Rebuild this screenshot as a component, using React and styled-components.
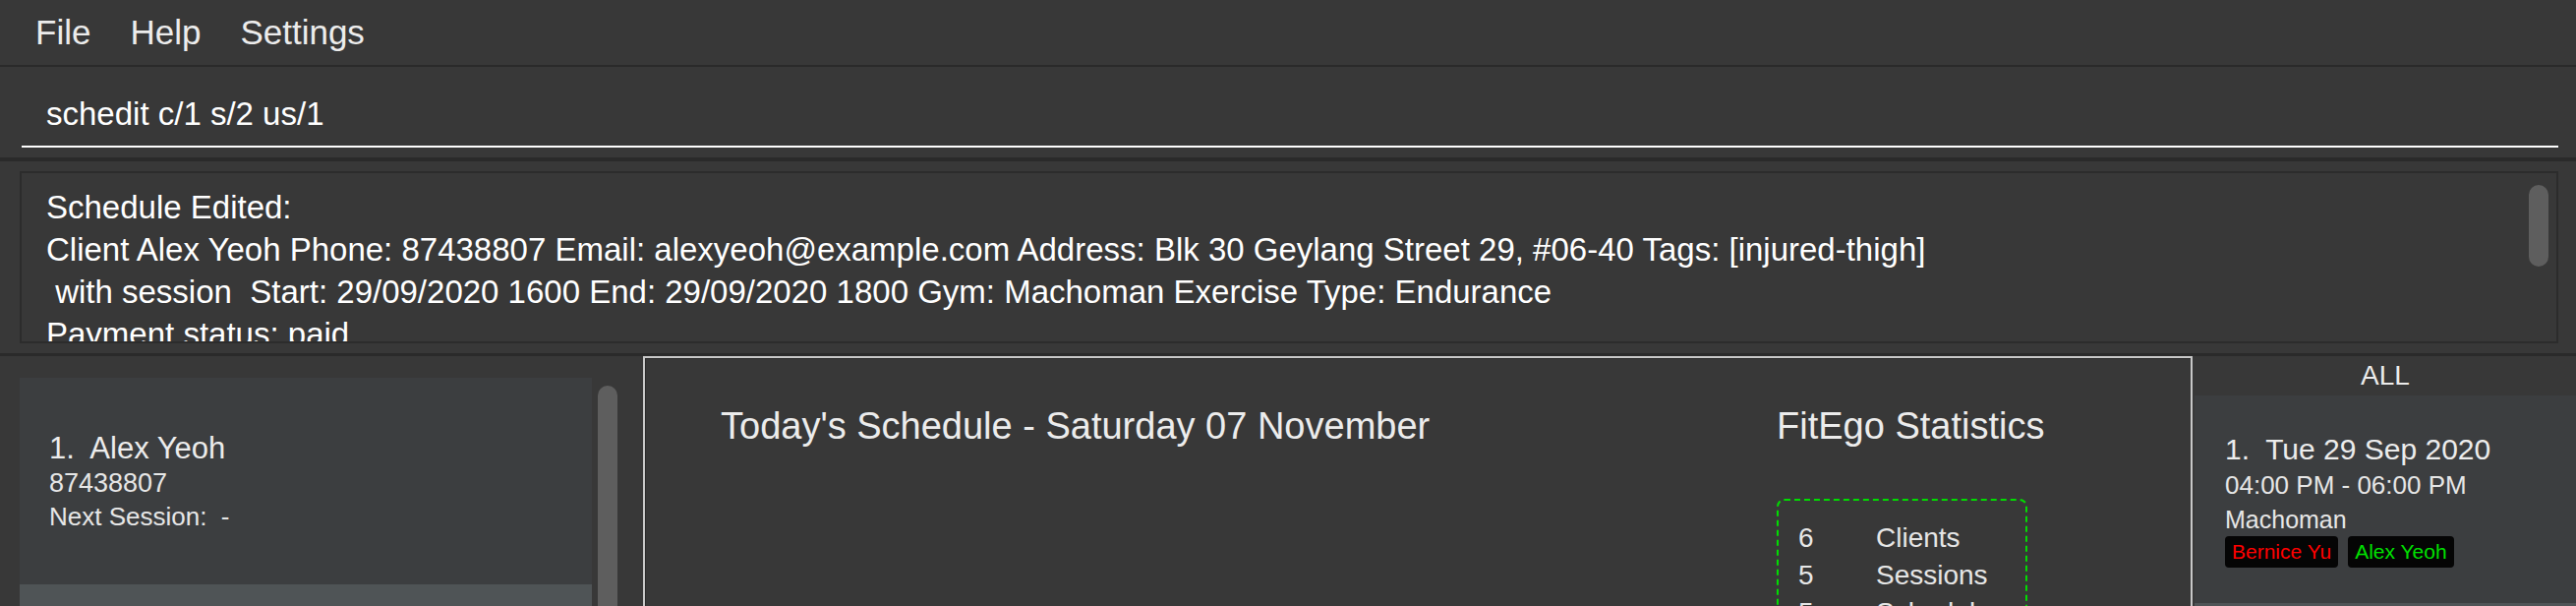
import React from "react";
import styled, { createGlobalStyle } from "styled-components";

const GlobalStyle = createGlobalStyle`
  html, body {
    margin: 0;
    padding: 0;
    background: #383838;
    overflow: hidden;
  }
  * {
    box-sizing: border-box;
  }
`;

const Window = styled.div`
  width: 2620px;
  height: 616px;
  display: flex;
  flex-direction: column;
  background: #383838;
  font-family: "Liberation Sans", Arial, sans-serif;
  color: #ececec;
  overflow: hidden;
`;

const MenuBar = styled.div`
  display: flex;
  height: 68px;
  flex: none;
  padding: 1px 0 0 16px;
  border-bottom: 2px solid #2a2a2a;
`;

const MenuItem = styled.div`
  padding: 0 20px;
  font-size: 35px;
  line-height: 64px;
  color: #ececec;
`;

const CommandBar = styled.div`
  height: 96px;
  flex: none;
  padding: 0 18px 0 22px;
  border-bottom: 4px solid #2a2a2a;
`;

const CommandInput = styled.div`
  height: 82px;
  padding: 28px 0 0 25px;
  font-size: 33px;
  line-height: 40px;
  color: #ffffff;
  border-bottom: 2px solid #ffffff;
`;

const ResultPane = styled.div`
  height: 198px;
  flex: none;
  padding: 10px 18px 10px 20px;
  border-bottom: 3px solid #2a2a2a;
`;

const ResultBox = styled.div`
  position: relative;
  height: 175px;
  padding: 13px 60px 0 25px;
  border: 2px solid #2c2c2c;
  overflow: hidden;
  font-size: 33px;
  line-height: 43px;
  color: #ffffff;
  white-space: pre;
`;

const ScrollThumb = styled.div`
  position: absolute;
  top: 12px;
  right: 8px;
  width: 20px;
  height: 83px;
  border-radius: 10px;
  background: #5e5e5e;
`;

const Main = styled.div`
  flex: 1;
  display: flex;
  min-height: 0;
`;

const ClientPanel = styled.div`
  width: 654px;
  flex: none;
  display: flex;
  padding: 22px 0 0 20px;
`;

const CardList = styled.div`
  width: 582px;
  display: flex;
  flex-direction: column;
`;

const ClientCard = styled.div`
  height: 210px;
  flex: none;
  padding: 54px 0 0 30px;
  background: ${(p) => (p.$alt ? "#4f5456" : "#3c3e40")};
`;

const ScrollTrack = styled.div`
  width: 20px;
  margin: 8px 0 0 6px;
  border-radius: 10px 10px 0 0;
  background: #5e5e5e;
`;

const CardTitle = styled.div`
  font-size: ${(p) => p.$size || 31}px;
  line-height: 36px;
  color: #ececec;
  white-space: pre;
`;

const CardLine = styled.div`
  font-size: ${(p) => p.$size || 26}px;
  line-height: ${(p) => p.$lh || 34}px;
  color: #e6e6e6;
  white-space: pre;
`;

const Dashboard = styled.div`
  width: 1576px;
  flex: none;
  display: flex;
  border: 2px solid #c8c8c8;
  border-bottom: none;
  box-shadow: inset 1px 1px 0 #2a2a2a;
  padding: 46px 165px 0 77px;
`;

const ScheduleColumn = styled.div`
  flex: 1;
`;

const StatsColumn = styled.div`
  width: 256px;
  flex: none;
`;

const SectionTitle = styled.div`
  font-size: 38px;
  line-height: 46px;
  color: #ececec;
  white-space: nowrap;
`;

const StatsBox = styled.div`
  margin-top: 51px;
  width: 255px;
  height: 200px;
  padding: 19px 0 0 20px;
  border: 2px dashed #00dd00;
  border-radius: 8px;
`;

const StatRow = styled.div`
  display: flex;
  font-size: 28px;
  line-height: 38px;
  color: #e6e6e6;
`;

const StatValue = styled.span`
  width: 79px;
`;

const SchedulePanel = styled.div`
  flex: 1;
  margin-left: 2px;
  display: flex;
  flex-direction: column;
`;

const PanelHeader = styled.div`
  height: 40px;
  flex: none;
  text-align: center;
  font-size: 28px;
  line-height: 40px;
  color: #ececec;
`;

const ScheduleCard = styled.div`
  height: 211px;
  flex: none;
  padding: 37px 0 0 31px;
  background: ${(p) => (p.$alt ? "#4f5456" : "#3c3e40")};
`;

const TagRow = styled.div`
  display: flex;
  gap: 10px;
`;

const Tag = styled.span`
  height: 32px;
  padding: 0 7px;
  border-radius: 4px;
  background: #050505;
  font-size: 21px;
  line-height: 32px;
  color: ${(p) => p.$color};
`;

const menus = ["File", "Help", "Settings"];

const resultLines = [
  "Schedule Edited:",
  "Client Alex Yeoh Phone: 87438807 Email: alexyeoh@example.com Address: Blk 30 Geylang Street 29, #06-40 Tags: [injured-thigh]",
  " with session  Start: 29/09/2020 1600 End: 29/09/2020 1800 Gym: Machoman Exercise Type: Endurance",
  "Payment status: paid",
];

const stats = [
  { value: 6, label: "Clients" },
  { value: 5, label: "Sessions" },
  { value: 5, label: "Schedules" },
];

export default function App() {
  return (
    <>
      <GlobalStyle />
      <Window>
        <MenuBar>
          {menus.map((m) => (
            <MenuItem key={m}>{m}</MenuItem>
          ))}
        </MenuBar>

        <CommandBar>
          <CommandInput>schedit c/1 s/2 us/1</CommandInput>
        </CommandBar>

        <ResultPane>
          <ResultBox>
            {resultLines.map((line, i) => (
              <div key={i}>{line}</div>
            ))}
            <ScrollThumb />
          </ResultBox>
        </ResultPane>

        <Main>
          <ClientPanel>
            <CardList>
              <ClientCard>
                <CardTitle>1.  Alex Yeoh</CardTitle>
                <CardLine $size={27}>87438807</CardLine>
                <CardLine>Next Session:  -</CardLine>
              </ClientCard>
              <ClientCard $alt />
            </CardList>
            <ScrollTrack />
          </ClientPanel>

          <Dashboard>
            <ScheduleColumn>
              <SectionTitle>Today's Schedule - Saturday 07 November</SectionTitle>
            </ScheduleColumn>
            <StatsColumn>
              <SectionTitle>FitEgo Statistics</SectionTitle>
              <StatsBox>
                {stats.map((s) => (
                  <StatRow key={s.label}>
                    <StatValue>{s.value}</StatValue>
                    <span>{s.label}</span>
                  </StatRow>
                ))}
              </StatsBox>
            </StatsColumn>
          </Dashboard>

          <SchedulePanel>
            <PanelHeader>ALL</PanelHeader>
            <ScheduleCard>
              <CardTitle $size={30}>1.  Tue 29 Sep 2020</CardTitle>
              <CardLine $lh={36}>04:00 PM - 06:00 PM</CardLine>
              <CardLine $size={25}>Machoman</CardLine>
              <TagRow>
                <Tag $color="#ff0000">Bernice Yu</Tag>
                <Tag $color="#00e000">Alex Yeoh</Tag>
              </TagRow>
            </ScheduleCard>
            <ScheduleCard $alt />
          </SchedulePanel>
        </Main>
      </Window>
    </>
  );
}
